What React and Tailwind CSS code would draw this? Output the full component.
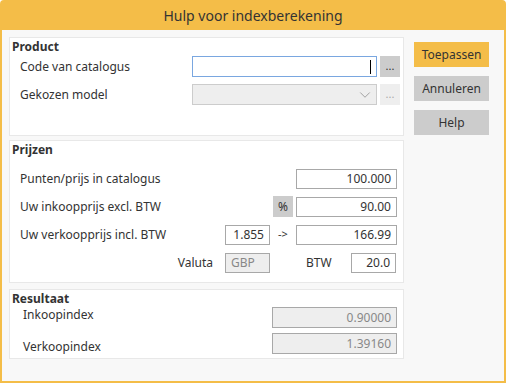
import React from 'react';
import { ChevronDown } from 'lucide-react';

const font = { fontFamily: '"Noto Sans", "Liberation Sans", sans-serif' };

const Panel = ({ title, className = '', children }) => (
  <div className={`bg-white border border-[#e8e8e8] ${className}`}>
    <div className="pl-[2px] pt-[1px] h-[17px] text-[12px] leading-[16px] font-bold text-[#333]">{title}</div>
    {children}
  </div>
);

const Field = ({ value, className = '', disabled = false }) => (
  <div
    className={`h-[20px] border border-[#a8a8a8] px-[5px] flex items-center justify-end text-[12px] ${
      disabled ? 'bg-[#eeeeee] text-[#888]' : 'bg-white text-[#333]'
    } ${className}`}
  >
    {value}
  </div>
);

const SideButton = ({ children, primary }) => (
  <button
    className={`w-[75px] h-[25px] text-[12px] text-[#333] ${primary ? 'bg-[#f4bd48]' : 'bg-[#cccccc]'}`}
  >
    {children}
  </button>
);

export default function App() {
  return (
    <div className="w-[506px] h-[384px] bg-white" style={font}>
      <div className="w-[506px] h-[383px] flex flex-col border-2 border-[#f4bd48] rounded-t-[4px] bg-[#f8f8f8]">
        {/* title */}
        <div className="h-[29px] bg-[#f4bd48] flex items-center justify-center text-[14px] text-[#333] -mt-[1px]">
          Hulp voor indexberekening
        </div>

        <div className="flex flex-1 pl-[7px] pt-[7px]">
          {/* left column */}
          <div className="w-[395px] flex flex-col">
            <Panel title="Product" className="h-[99px]">
              <div className="flex items-center h-[21px] mt-[1px]">
                <div className="w-[182px] pl-[10px] text-[12px] text-[#333]">Code van catalogus</div>
                <div className="w-[185px] h-[21px] border border-[#7aa7e0] bg-white flex items-center justify-end pr-[5px]">
                  <div className="w-[1px] h-[14px] bg-black" />
                </div>
                <div className="ml-[3px] w-[20px] h-[21px] bg-[#cccccc] flex items-center justify-center text-[11px] text-[#333] leading-none pb-[3px]">
                  ...
                </div>
              </div>
              <div className="flex items-center h-[21px] mt-[7px]">
                <div className="w-[182px] pl-[10px] text-[12px] text-[#333]">Gekozen model</div>
                <div className="w-[185px] h-[21px] border border-[#cccccc] bg-[#eeeeee] flex items-center justify-end pr-[2px]">
                  <ChevronDown className="w-[18px] h-[18px] text-[#999]" strokeWidth={1.2} />
                </div>
                <div className="ml-[3px] w-[20px] h-[21px] bg-[#eeeeee] flex items-center justify-center text-[11px] text-[#aaa] leading-none pb-[3px]">
                  ...
                </div>
              </div>
            </Panel>

            <Panel title="Prijzen" className="h-[143px] mt-[4px]">
              <div className="pr-[6px] pl-[10px] flex flex-col gap-[7px] mt-[10px] text-[12px] text-[#333]">
                <div className="flex items-center h-[21px]">
                  <div className="flex-1">Punten/prijs in catalogus</div>
                  <Field value="100.000" className="w-[101px]" />
                </div>
                <div className="flex items-center h-[21px]">
                  <div className="flex-1">Uw inkoopprijs excl. BTW</div>
                  <div className="w-[20px] h-[21px] bg-[#cccccc] flex items-center justify-center text-[12px]">%</div>
                  <Field value="90.00" className="w-[101px] ml-[3px]" />
                </div>
                <div className="flex items-center h-[21px]">
                  <div className="flex-1">Uw verkoopprijs incl. BTW</div>
                  <Field value="1.855" className="w-[45px]" />
                  <div className="w-[26px] text-center text-[11px]">-&gt;</div>
                  <Field value="166.99" className="w-[101px]" />
                </div>
                <div className="flex items-center h-[21px]">
                  <div className="flex-1 text-right pr-[12px]">Valuta</div>
                  <Field value="GBP" disabled className="w-[45px] !justify-start" />
                  <div className="w-[81px] pl-[36px]">BTW</div>
                  <Field value="20.0" className="w-[45px] mr-[1px]" />
                </div>
              </div>
            </Panel>

            <Panel title="Resultaat" className="h-[70px] mt-[6px]">
              <div className="pr-[6px] pl-[13px] text-[12px] text-[#333]">
                <div className="flex items-start h-[21px]">
                  <div className="flex-1 -mt-[1px]">Inkoopindex</div>
                  <Field value="0.90000" disabled className="w-[125px] h-[21px]" />
                </div>
                <div className="flex items-end h-[21px] mt-[5px]">
                  <div className="flex-1 mb-[-2px]">Verkoopindex</div>
                  <Field value="1.39160" disabled className="w-[125px] h-[21px]" />
                </div>
              </div>
            </Panel>
          </div>

          {/* right column */}
          <div className="flex flex-col gap-[9px] ml-[10px] pt-[5px]">
            <SideButton primary>Toepassen</SideButton>
            <SideButton>Annuleren</SideButton>
            <SideButton>Help</SideButton>
          </div>
        </div>
      </div>
    </div>
  );
}
